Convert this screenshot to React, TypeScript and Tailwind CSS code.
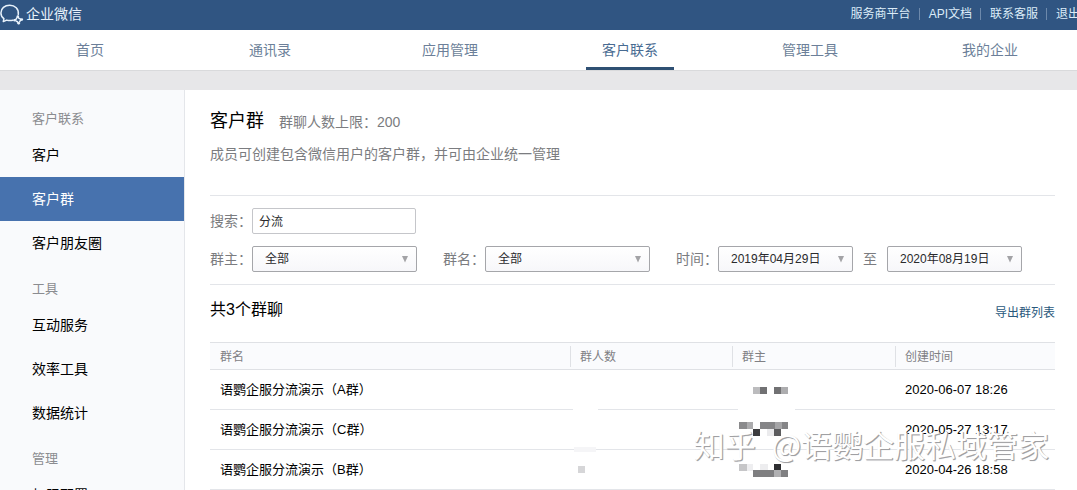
import React from 'react';

const topLinks = ['服务商平台', 'API文档', '联系客服', '退出'];
const tabs = ['首页', '通讯录', '应用管理', '客户联系', '管理工具', '我的企业'];
const sections = [
  { title: '客户联系', items: ['客户', '客户群', '客户朋友圈'] },
  { title: '工具', items: ['互动服务', '效率工具', '数据统计'] },
  { title: '管理', items: ['权限配置'] },
];

type Cell = [x: number, y: number, w: number, color: string];
type Row = { name: string; created: string; owner: Cell[]; count: Cell[] };

const rows: Row[] = [
  {
    name: '语鹦企服分流演示（A群）',
    created: '2020-06-07 18:26',
    owner: [[14, 7, 7, '#bcbcbe'], [21, 7, 7, '#717173'], [35, 7, 7, '#717173'], [42, 7, 7, '#adadaf']],
    count: [],
  },
  {
    name: '语鹦企服分流演示（C群）',
    created: '2020-05-27 13:17',
    owner: [
      [0, 2, 8, '#8a8a8c'], [8, 2, 6, '#acacae'], [21, 2, 15, '#858587'], [36, 2, 7, '#a5a5a7'], [43, 2, 6, '#858587'],
      [14, 9, 7, '#3c3c3e'], [28, 9, 7, '#ebebed'], [35, 9, 7, '#5c5c5e'],
    ],
    count: [],
  },
  {
    name: '语鹦企服分流演示（B群）',
    created: '2020-04-26 18:58',
    owner: [
      [0, 4, 8, '#c6c6c8'], [8, 4, 6, '#eeeef0'], [21, 4, 8, '#ededef'], [35, 4, 7, '#2f2f31'],
      [14, 10, 21, '#7f7f81'], [35, 10, 7, '#b0b0b2'], [42, 10, 7, '#808082'],
    ],
    count: [[0, 6, 7, '#d6d6d8']],
  },
];

function Mosaic({ cells, width }: { cells: Cell[]; width: number }) {
  return (
    <svg width={width} height="20" className="block" shapeRendering="crispEdges" aria-hidden="true">
      {cells.map(([x, y, w, c]) => (
        <rect key={`${x}-${y}`} x={x} y={y} width={w} height="7" fill={c} />
      ))}
    </svg>
  );
}

function Arrow() {
  return (
    <svg width="8" height="8" viewBox="0 0 8 8" className="pointer-events-none absolute right-2 top-1/2 -translate-y-1/2" aria-hidden="true">
      <path d="M1 1h6L4 7.4z" fill="#a3a3a6" />
    </svg>
  );
}

const box =
  'block h-[26px] w-full appearance-none rounded-xs border border-[#a5a6aa] bg-linear-to-b from-white to-[#f7f7fa] pl-3 text-left text-xs text-[#2a2a2c]';

function Picker({ id, label }: { id: string; label: string }) {
  return (
    <div className="flex items-center">
      <label htmlFor={id}>{label}</label>
      <div className="relative w-[165px]">
        <select id={id} className={box}>
          <option>全部</option>
        </select>
        <Arrow />
      </div>
    </div>
  );
}

function DateButton({ value }: { value: string }) {
  return (
    <div className="relative w-[135px]">
      <button type="button" className={box}>{value}</button>
      <Arrow />
    </div>
  );
}

export default function App() {
  return (
    <div className="relative flex h-screen flex-col overflow-hidden bg-[#e7e7e9] font-['Liberation_Sans','Noto_Sans_CJK_SC',sans-serif] text-sm text-black">
      <header className="-mr-[3px] shrink-0">
        <div className="flex h-[30px] items-center justify-between bg-[#305582] pb-[2px] text-white">
          <a href="#" className="flex items-center gap-[2px] text-[#e8f2fb]">
            <svg width="24" height="24" viewBox="0 0 24 24" fill="none" stroke="currentColor" strokeLinejoin="round" strokeLinecap="round" aria-hidden="true">
              <path strokeWidth="1.5" d="M18.300 12.500C19 7 15 3.200 9.700 3.200C4.700 3.200.9 6.500.9 10.900C.9 13.300 2 15.200 3.900 16.600L3.300 19.600L6.700 18.100C8.600 18.700 10.600 18.800 12.800 18.200" />
              <path strokeWidth="1.5" d="M18 14.600C18.300 15.800 19.100 16.700 20.400 17M22 17.600C20.800 17.900 19.900 18.700 19.600 19.900M18.400 21.400C18.100 20.200 17.300 19.300 16.100 19M14.500 18C15.700 17.700 16.600 16.900 16.900 15.700" />
              <g fill="currentColor" stroke="none">
                <circle cx="17.800" cy="14.500" r="1.300" />
                <circle cx="21.800" cy="17.500" r="1.300" />
                <circle cx="18.700" cy="21.300" r="1.300" />
                <circle cx="14.600" cy="18.200" r="1.300" />
              </g>
            </svg>
            <span>企业微信</span>
          </a>
          <nav className="flex items-center text-xs text-[#dcecf8]">
            {topLinks.map((t, i) => (
              <a key={t} href="#" className={i ? 'ml-2 border-l border-[#6d89ab] pl-[9px] leading-3' : 'leading-3'}>
                {t}
              </a>
            ))}
          </nav>
        </div>
        <nav className="grid h-[41px] grid-cols-6 justify-items-center border-b border-[#d9dadc] bg-white">
          {tabs.map((t) => (
            <a
              key={t}
              href="#"
              className={
                t === '客户联系'
                  ? 'flex w-[88px] items-center justify-center border-b-3 border-[#2f5073] pt-[3px] text-[#486b92]'
                  : 'flex items-center justify-center text-[#6c7f99]'
              }
            >
              {t}
            </a>
          ))}
        </nav>
      </header>

      <div className="mt-[19px] flex min-h-0 flex-1 bg-white">
        <aside className="w-[185px] shrink-0 border-r border-[#e4e6ea] bg-[#f9fafc] pt-[5px]">
          {sections.map((s) => (
            <section key={s.title}>
              <h2 className="pl-8 pt-[10px] text-[13px] leading-7 text-[#8b8c90]">{s.title}</h2>
              {s.items.map((it) => (
                <a
                  key={it}
                  href="#"
                  className={
                    it === '客户群'
                      ? 'block bg-[#4772ae] pl-8 leading-[44px] text-white'
                      : 'block pl-8 leading-[44px]'
                  }
                >
                  {it}
                </a>
              ))}
            </section>
          ))}
        </aside>

        <main className="min-w-0 flex-1 pl-[25px] pr-[22px] pt-4">
          <div className="flex items-baseline gap-[15px] leading-[30px]">
            <h1 className="text-lg leading-[30px]">客户群</h1>
            <span className="text-[#7b7c80]">群聊人数上限：200</span>
          </div>
          <p className="pt-[7px] leading-5 text-[#7b7c80]">成员可创建包含微信用户的客户群，并可由企业统一管理</p>

          <form className="mt-[31px] flex flex-col gap-3 border-y border-[#e3e5e9] py-3 text-[#7b7c80]">
            <div className="flex items-center">
              <label htmlFor="search">搜索：</label>
              <input
                id="search"
                defaultValue="分流"
                className="h-[26px] w-[164px] rounded-xs border border-[#c5c6ca] bg-white px-[6px] pb-[2px] text-xs text-[#2a2a2c]"
              />
            </div>
            <div className="flex items-center gap-[26px] whitespace-nowrap">
              <Picker id="owner" label="群主：" />
              <Picker id="group" label="群名：" />
              <div className="flex items-center">
                <span>时间：</span>
                <DateButton value="2019年04月29日" />
                <span className="px-[10px]">至</span>
                <DateButton value="2020年08月19日" />
              </div>
            </div>
          </form>

          <div className="flex h-[57px] items-center justify-between pb-2">
            <h2 className="text-base">共3个群聊</h2>
            <a href="#" className="pt-[6px] text-xs text-[#2a587c]">导出群列表</a>
          </div>

          <table className="w-full table-fixed border-separate border-spacing-0 text-left text-[13px]">
            <colgroup>
              <col />
              <col className="w-[162px]" />
              <col className="w-[163px]" />
              <col className="w-[160px]" />
            </colgroup>
            <thead>
              <tr className="h-7 bg-[#fafbfd] text-xs text-[#7f8084]">
                {['群名', '群人数', '群主', '创建时间'].map((h, i) => (
                  <th key={h} className="border-y border-[#dfe1e5] p-0 font-normal">
                    <div className={i ? 'border-l border-[#dfe1e5] pl-[9px] pt-px leading-5' : 'pl-[10px] pt-px leading-5'}>{h}</div>
                  </th>
                ))}
              </tr>
            </thead>
            <tbody>
              {rows.map((r, i) => (
                <tr key={r.name} className="h-10">
                  <td className="border-b border-[#e3e5e9] p-0 pl-[10px] pt-[2px]">{r.name}</td>
                  <td className="relative border-b border-[#e3e5e9] p-0 pl-2">
                    <Mosaic cells={r.count} width={20} />
                    {i === 0 && <span className="absolute -bottom-px left-[3px] h-px w-[25px] bg-white" />}
                    {i === 1 && <span className="absolute -bottom-[3px] left-1 h-[5px] w-[22px] bg-[#f5f5f7]" />}
                  </td>
                  <td className="relative border-b border-[#e3e5e9] p-0 pl-[7px]">
                    <Mosaic cells={r.owner} width={50} />
                    {i === 0 && <span className="absolute -bottom-px left-[6px] h-px w-[57px] bg-white" />}
                  </td>
                  <td className="border-b border-[#e3e5e9] p-0 pl-[10px] pt-[2px]">{r.created}</td>
                </tr>
              ))}
            </tbody>
          </table>
        </main>
      </div>

      <div className="pointer-events-none absolute bottom-[23px] right-[28px] flex gap-4 whitespace-nowrap font-['Noto_Sans_CJK_SC',sans-serif] text-[31px] leading-[46px] text-white [text-shadow:1px_1px_0_#a0a0a3,1px_1px_1px_#b4b4b7]">
        <span>知乎</span>
        <span>@语鹦企服私域管家</span>
      </div>
    </div>
  );
}
